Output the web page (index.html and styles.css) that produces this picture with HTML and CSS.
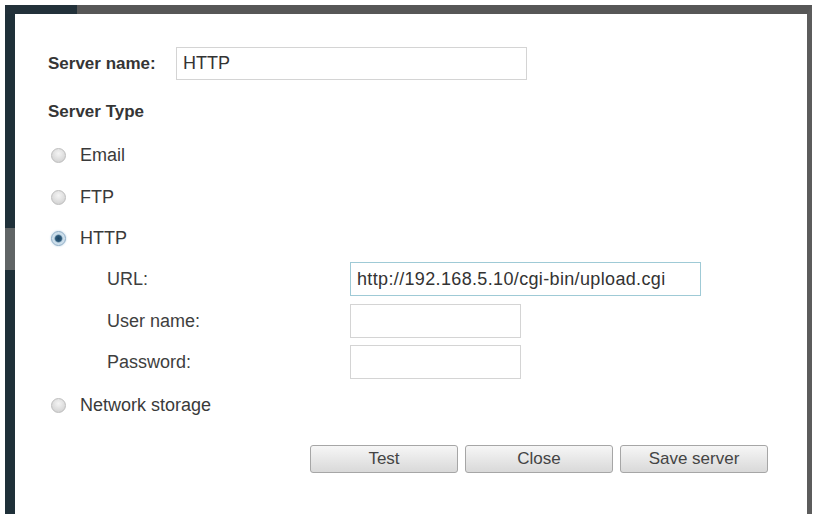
FILE: index.html
```html
<!DOCTYPE html>
<html>
<head>
<meta charset="utf-8">
<link rel="stylesheet" href="styles.css">
</head>
<body>
<div class="frame">
  <form class="form">
    <div class="row name-row">
      <label class="bold-label name-label">Server name:</label>
      <div class="input name-input">HTTP</div>
    </div>
    <div class="row type-title bold-label">Server Type</div>
    <div class="row radio-row r-email">
      <span class="radio"></span><span class="radio-label">Email</span>
    </div>
    <div class="row radio-row r-ftp">
      <span class="radio"></span><span class="radio-label">FTP</span>
    </div>
    <div class="row radio-row r-http">
      <span class="radio checked"></span><span class="radio-label">HTTP</span>
    </div>
    <div class="row sub-row r-url">
      <span class="sub-label">URL:</span>
      <div class="input url-input">http://192.168.5.10/cgi-bin/upload.cgi</div>
    </div>
    <div class="row sub-row r-user">
      <span class="sub-label">User name:</span>
      <div class="input short-input"></div>
    </div>
    <div class="row sub-row r-pass">
      <span class="sub-label">Password:</span>
      <div class="input short-input"></div>
    </div>
    <div class="row radio-row r-nas">
      <span class="radio"></span><span class="radio-label">Network storage</span>
    </div>
    <div class="row button-row">
      <span class="btn">Test</span>
      <span class="btn">Close</span>
      <span class="btn">Save server</span>
    </div>
  </form>
</div>
</body>
</html>
```

FILE: styles.css
```css
html, body {
  margin: 0;
  padding: 0;
  background: #ffffff;
}

body {
  font-family: "Liberation Sans", Arial, sans-serif;
  color: #3c3c3c;
  overflow: hidden;
}

.frame {
  position: relative;
  box-sizing: border-box;
  margin: 5px 0 0 5px;
  width: 807px;
  height: 509px;
  border-top: 9px solid #575757;
  border-left: 10px solid #1f3039;
  border-right: 5px solid #5c5c5c;
  background: #ffffff;
}

/* darker segment of the top bar at the left */
.frame::before {
  content: "";
  position: absolute;
  top: -9px;
  left: -10px;
  width: 72px;
  height: 9px;
  background: #22313a;
}

/* gray segment on the left border */
.frame::after {
  content: "";
  position: absolute;
  top: 214px;
  left: -10px;
  width: 10px;
  height: 42px;
  background: #606465;
}

.form {
  display: flex;
  flex-direction: column;
  padding: 33px 0 0 33px;
}

.row {
  display: flex;
  align-items: center;
  height: 32px;
}

.bold-label {
  font-weight: bold;
  font-size: 17px;
  color: #353535;
}

.name-row {
  height: 33px;
}

.name-label {
  width: 128px;
}

.input {
  box-sizing: border-box;
  height: 100%;
  border: 1px solid #d4d4d4;
  background: #ffffff;
  font-size: 18px;
  color: #333333;
  display: flex;
  align-items: center;
  padding-left: 6px;
}

.name-input {
  width: 351px;
}

.type-title {
  margin-top: 16px;
}

.radio-row .radio {
  margin-left: 3px;
  margin-right: 14px;
}

.radio {
  box-sizing: border-box;
  width: 15px;
  height: 15px;
  border-radius: 50%;
  border: 1px solid #bdbdbd;
  background: radial-gradient(circle at 50% 35%, #f4f4f4 0%, #dedede 55%, #cacaca 100%);
  flex: none;
}

.radio.checked {
  border: 1px solid #8aaac4;
  background: radial-gradient(circle, #1c4464 0%, #2b5878 32%, #c6dae8 48%, #e4edf4 100%);
  box-shadow: 0 0 2px #a8c6dc;
}

.radio-label {
  font-size: 18px;
  color: #3a3a3a;
}

.r-email { margin-top: 11px; }
.r-ftp { margin-top: 10px; }
.r-http { margin-top: 9px; }

.sub-row {
  height: 34px;
}

.sub-label {
  box-sizing: border-box;
  width: 302px;
  padding-left: 59px;
  font-size: 18px;
  color: #3e3e3e;
}

.r-url { margin-top: 8px; }
.r-user { margin-top: 8px; }
.r-pass { margin-top: 7px; }

.url-input {
  width: 351px;
  border-color: #9fcad6;
  font-size: 18px;
  letter-spacing: 0.35px;
}

.short-input {
  width: 171px;
}

.r-nas { margin-top: 10px; }

.button-row {
  margin-top: 24px;
  height: 28px;
  padding-left: 262px;
  gap: 7px;
}

.btn {
  box-sizing: border-box;
  width: 148px;
  height: 28px;
  border: 1px solid #a6a6a6;
  border-radius: 3px;
  background: linear-gradient(#f6f6f6, #e6e6e6 55%, #d9d9d9);
  display: flex;
  align-items: center;
  justify-content: center;
  font-size: 17px;
  color: #444444;
}
```
